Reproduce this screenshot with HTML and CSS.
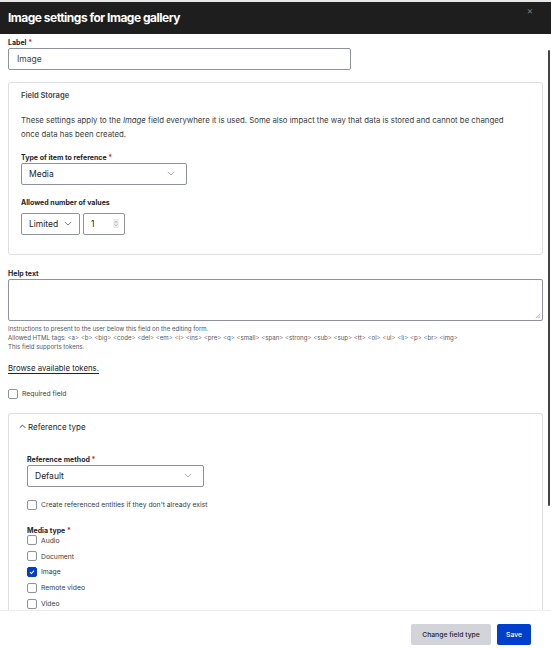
FILE: index.html
```html
<!DOCTYPE html>
<html>
<head>
<meta charset="utf-8">
<link rel="stylesheet" href="styles.css">
</head>
<body>
<div class="dialog">
  <div class="titlebar">
    <h1 class="title">Image settings for Image gallery</h1>
    <span class="close">×</span>
  </div>
  <div class="content">
    <div class="item item-label">
      <label class="flabel">Label <span class="req">*</span></label>
      <div class="input text-input">Image</div>
    </div>

    <div class="fieldset storage">
      <div class="legend">Field Storage</div>
      <p class="intro">These settings apply to the <em>Image</em> field everywhere it is used. Some also impact the way that data is stored and cannot be changed once data has been created.</p>
      <div class="item">
        <label class="flabel">Type of item to reference <span class="req">*</span></label>
        <div class="input select sel-type"><span>Media</span><svg class="chev" viewBox="0 0 10 6"><path d="M1 1l4 4 4-4" fill="none" stroke="#8e929c" stroke-width="1"/></svg></div>
      </div>
      <div class="item item-values">
        <label class="flabel">Allowed number of values</label>
        <div class="row">
          <div class="input select sel-limit"><span>Limited</span><svg class="chev" viewBox="0 0 10 6"><path d="M1 1l4 4 4-4" fill="none" stroke="#55565b" stroke-width="1"/></svg></div>
          <div class="input num"><span>1</span><svg class="spin" viewBox="0 0 6 10"><rect width="6" height="10" fill="#ececec"/><path d="M1.5 4l1.5-1.5 1.5 1.5M1.5 6l1.5 1.5 1.5-1.5" fill="none" stroke="#888" stroke-width="0.7"/></svg></div>
        </div>
      </div>
    </div>

    <div class="item help">
      <label class="flabel">Help text</label>
      <div class="input textarea"><svg class="grip" viewBox="0 0 8 8"><path d="M7 2L2 7M7 4L4 7M7 6L6 7" stroke="#999" stroke-width="0.8"/></svg></div>
      <div class="desc">Instructions to present to the user below this field on the editing form.<br>Allowed HTML tags: &lt;a&gt; &lt;b&gt; &lt;big&gt; &lt;code&gt; &lt;del&gt; &lt;em&gt; &lt;i&gt; &lt;ins&gt; &lt;pre&gt; &lt;q&gt; &lt;small&gt; &lt;span&gt; &lt;strong&gt; &lt;sub&gt; &lt;sup&gt; &lt;tt&gt; &lt;ol&gt; &lt;ul&gt; &lt;li&gt; &lt;p&gt; &lt;br&gt; &lt;img&gt;<br>This field supports tokens.</div>
    </div>

    <a class="tokens">Browse available tokens.</a>

    <div class="check-row required"><span class="cb"></span><span class="cb-label">Required field</span></div>

    <div class="fieldset details">
      <div class="summary"><svg class="up" viewBox="0 0 10 6"><path d="M1 5l4-4 4 4" fill="none" stroke="#232429" stroke-width="1.2"/></svg>Reference type</div>
      <div class="details-body">
        <div class="item">
          <label class="flabel">Reference method <span class="req">*</span></label>
          <div class="input select sel-method"><span>Default</span><svg class="chev" viewBox="0 0 10 6"><path d="M1 1l4 4 4-4" fill="none" stroke="#8e929c" stroke-width="1"/></svg></div>
        </div>
        <div class="check-row create"><span class="cb"></span><span class="cb-label">Create referenced entities if they don't already exist</span></div>
        <div class="item media">
          <label class="flabel">Media type <span class="req">*</span></label>
          <div class="check-list">
            <div class="check-row"><span class="cb"></span><span class="cb-label">Audio</span></div>
            <div class="check-row"><span class="cb"></span><span class="cb-label">Document</span></div>
            <div class="check-row"><span class="cb checked"><svg viewBox="0 0 10 10"><path d="M2.5 5.2l1.8 1.8 3.3-3.8" fill="none" stroke="#fff" stroke-width="1.3"/></svg></span><span class="cb-label">Image</span></div>
            <div class="check-row"><span class="cb"></span><span class="cb-label">Remote video</span></div>
            <div class="check-row"><span class="cb"></span><span class="cb-label">Video</span></div>
          </div>
        </div>
      </div>
    </div>
    <div class="scrollbar"></div>
  </div>
  <div class="footer">
    <button class="btn btn-secondary">Change field type</button>
    <button class="btn btn-primary">Save</button>
  </div>
</div>
</body>
</html>
```

FILE: styles.css
```css
* { box-sizing: border-box; }
html, body { margin: 0; padding: 0; background: #fff; }
body {
  font-family: Inter, "Noto Sans", sans-serif;
  color: #232429;
  width: 551px;
  height: 649px;
  overflow: hidden;
}
.dialog {
  width: 551px;
  height: 649px;
  display: flex;
  flex-direction: column;
}
.titlebar {
  height: 34px;
  background: #1e1e1f;
  border-top: 2px solid #e8e8e8;
  display: flex;
  align-items: center;
  justify-content: space-between;
  padding: 0 18px 0 8px;
  flex: none;
}
.title {
  margin: 0;
  color: #fff;
  font-size: 12px;
  font-weight: 700;
  letter-spacing: -0.5px;
  line-height: 1;
}
.close {
  color: #777;
  font-size: 10px;
  align-self: flex-start;
  margin-top: 2px;
}
.content {
  flex: 1;
  overflow: hidden;
  padding: 4.5px 8px 0 8px;
  position: relative;
}
.scrollbar {
  position: absolute;
  right: 1px;
  top: 16px;
  width: 2px;
  height: 456px;
  background: #444;
  border-radius: 1px;
}
.flabel {
  display: block;
  font-size: 7px;
  font-weight: 700;
  line-height: 8px;
  margin-bottom: 1px;
}
.req { color: #d72222; }
.input {
  border: 1px solid #8e929c;
  border-radius: 2px;
  background: #fff;
  font-size: 8.5px;
  color: #232429;
  display: flex;
  align-items: center;
}
.text-input {
  width: 343px;
  height: 22px;
  padding: 0 8px;
  color: #444;
}
.fieldset {
  border: 1px solid #dedfe4;
  border-radius: 3px;
}
.storage {
  margin-top: 12.5px;
  padding: 8px 12px 0 12px;
  height: 173px;
}
.legend {
  font-size: 7.5px;
  font-weight: 700;
  color: #55565b;
  line-height: 10px;
}
.intro {
  margin: 12px 20px 0 0;
  font-size: 7.8px;
  line-height: 14px;
  color: #3b3c40;
}
.storage .item { margin-top: 12.5px; }
.storage .item-values { margin-top: 14px; }
.storage .item-values .flabel { margin-bottom: 6px; }
.select {
  justify-content: space-between;
  height: 22px;
  padding: 0 11px 0 7px;
}
.chev { width: 8px; height: 5px; }
.sel-type { width: 166px; }
.row { display: flex; gap: 3px; }
.sel-limit { width: 59px; padding-right: 7px; }
.num { width: 42px; height: 22px; padding: 0 5px 0 7px; justify-content: space-between; }
.spin { width: 6px; height: 9px; }
.help { margin-top: 14.5px; }
.textarea {
  width: 535px;
  height: 42px;
  position: relative;
  border-color: #8e929c;
}
.grip { position: absolute; right: 1px; bottom: 1px; width: 7px; height: 7px; }
.desc {
  font-size: 6.1px;
  line-height: 9px;
  color: #55565b;
  margin-top: 3px;
}
.tokens {
  display: inline-block;
  margin-top: 11px;
  font-size: 7.8px;
  color: #232429;
  text-decoration: underline;
  text-underline-offset: 2px;
  line-height: 12px;
}
.check-row {
  display: flex;
  align-items: center;
  height: 16px;
}
.required { margin-top: 11px; }
.cb {
  width: 10px;
  height: 10px;
  border: 1px solid #8e929c;
  border-radius: 2px;
  margin-right: 4px;
  flex: none;
  display: flex;
  align-items: center;
  justify-content: center;
}
.cb.checked { background: #003ecc; border-color: #003ecc; }
.cb svg { width: 10px; height: 10px; }
.cb-label { font-size: 6.8px; color: #3b3c40; }
.details {
  margin-top: 11px;
  height: 220px;
  border-bottom: none;
  border-radius: 3px 3px 0 0;
}
.summary {
  display: flex;
  align-items: center;
  font-size: 8px;
  color: #232429;
  padding: 8px 10px 8px 10px;
  line-height: 10px;
}
.up { width: 7px; height: 5px; margin-right: 2px; }
.details-body { padding: 16px 18px 0 18px; }
.sel-method { width: 177px; }
.create { margin-top: 10px; }
.media { margin-top: 14px; }
.media .flabel { margin-bottom: -2px; }
.check-list .check-row { height: 15.8px; }
.footer {
  flex: none;
  height: 39px;
  border-top: 1px solid #eeeef0;
  display: flex;
  align-items: center;
  justify-content: flex-end;
  gap: 6px;
  padding: 8px 20px 0 0;
}
.btn {
  font-family: Inter, "Noto Sans", sans-serif;
  font-size: 6.8px;
  font-weight: 500;
  border: none;
  border-radius: 2px;
  height: 21px;
  padding: 0;
  white-space: nowrap;
}
.btn-secondary { background: #d3d4d9; color: #232429; width: 80px; }
.btn-primary { background: #003ecc; color: #fff; width: 34px; }
```
